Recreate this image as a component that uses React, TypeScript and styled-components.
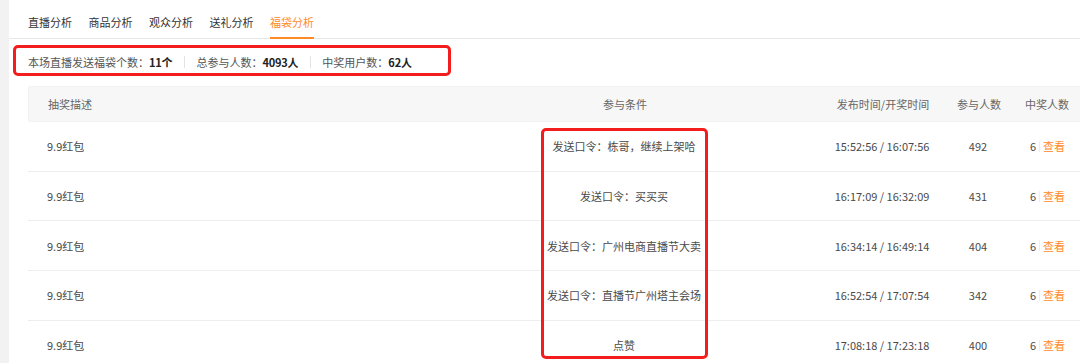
import React from 'react'
import styled, { createGlobalStyle } from 'styled-components'

const GlobalStyle = createGlobalStyle`
  html, body {
    margin: 0;
    padding: 0;
    background: #f2f2f2;
    font-family: "Noto Sans CJK SC", "Noto Sans", sans-serif;
    font-size: 11px;
    color: #4a4a4a;
  }
  * { box-sizing: border-box; }
`;

const Page = styled.div`
  position: relative;
  height: 363px;
  overflow: hidden;
`;

const Panel = styled.div`
  margin-left: 9px;
  height: 100%;
  background: #fff;
  padding-left: 19px;
`;

const TabBar = styled.div`
  display: flex;
  gap: 16.5px;
  height: 39px;
  margin-left: -19px;
  padding-left: 19px;
  border-bottom: 1px solid #e8e8e8;
`;

const Tab = styled.div<{ $active?: boolean }>`
  height: 39px;
  padding-top: 7px;
  display: flex;
  align-items: center;
  color: ${(p) => (p.$active ? '#ff8a2a' : '#333')};
  border-bottom: 2px solid ${(p) => (p.$active ? '#ff8a2a' : 'transparent')};
  margin-bottom: -1px;
`;

const Summary = styled.div`
  display: flex;
  align-items: center;
  height: 20px;
  margin-top: 13px;
`;

const SummaryItem = styled.div`
  display: flex;
  align-items: center;
  color: #555;
`;

const SummaryValue = styled.span`
  font-weight: 700;
  color: #222;
  letter-spacing: -0.2px;
`;

const Divider = styled.span`
  width: 1px;
  height: 12px;
  background: #e3e3e3;
  margin: 0 11px 0 12px;
`;

const Table = styled.div`
  margin-top: 14px;
`;

const cols = '412px 368px 148px 44px 1fr';

const HeadRow = styled.div`
  display: grid;
  grid-template-columns: ${cols};
  height: 36px;
  align-items: center;
  background: #f7f7f7;
  border: 1px solid #f0f0f0;
  border-right: none;
  border-radius: 3px 0 0 3px;
  color: #666;
`;

const Row = styled.div`
  display: grid;
  grid-template-columns: ${cols};
  height: 49.7px;
  align-items: center;
  border-bottom: 1px solid #eeeeee;
`;

const Cell = styled.div<{ $align?: 'left' | 'center' | 'right' }>`
  text-align: ${(p) => p.$align ?? 'center'};
  padding-left: ${(p) => (p.$align === 'left' ? '19px' : '0')};
  padding-right: ${(p) => (p.$align === 'right' ? '11px' : '0')};
  white-space: nowrap;
`;

const Winners = styled.div`
  display: flex;
  justify-content: flex-end;
  align-items: center;
  padding-right: 15px;
`;

const WinSep = styled.span`
  width: 1px;
  height: 11px;
  background: #eee;
  margin: 0 3px 0 3px;
`;

const ViewLink = styled.span`
  color: #ff8a2a;
  cursor: pointer;
`;

const Mark = styled.div`
  position: absolute;
  border: 3px solid #f31d1d;
  border-radius: 5px;
  pointer-events: none;
`;

const tabs = ['直播分析', '商品分析', '观众分析', '送礼分析', '福袋分析'];

const rows = [
  { cond: '发送口令：栋哥，继续上架哈', time: '15:52:56 / 16:07:56', joined: 492, won: 6 },
  { cond: '发送口令：买买买', time: '16:17:09 / 16:32:09', joined: 431, won: 6 },
  { cond: '发送口令：广州电商直播节大卖', time: '16:34:14 / 16:49:14', joined: 404, won: 6 },
  { cond: '发送口令：直播节广州塔主会场', time: '16:52:54 / 17:07:54', joined: 342, won: 6 },
  { cond: '点赞', time: '17:08:18 / 17:23:18', joined: 400, won: 6 },
];

export default function App() {
  return (
    <Page>
      <GlobalStyle />
      <Panel>
        <TabBar>
          {tabs.map((t) => (
            <Tab key={t} $active={t === '福袋分析'}>
              {t}
            </Tab>
          ))}
        </TabBar>
        <Summary>
          <SummaryItem>
            本场直播发送福袋个数：<SummaryValue>11个</SummaryValue>
          </SummaryItem>
          <Divider />
          <SummaryItem>
            总参与人数：<SummaryValue>4093人</SummaryValue>
          </SummaryItem>
          <Divider />
          <SummaryItem>
            中奖用户数：<SummaryValue>62人</SummaryValue>
          </SummaryItem>
        </Summary>
        <Table>
          <HeadRow>
            <Cell $align="left">抽奖描述</Cell>
            <Cell>参与条件</Cell>
            <Cell>发布时间/开奖时间</Cell>
            <Cell>参与人数</Cell>
            <Cell $align="right">中奖人数</Cell>
          </HeadRow>
          {rows.map((r) => (
            <Row key={r.time}>
              <Cell $align="left">9.9红包</Cell>
              <Cell>{r.cond}</Cell>
              <Cell>{r.time}</Cell>
              <Cell>{r.joined}</Cell>
              <Winners>
                {r.won}
                <WinSep />
                <ViewLink>查看</ViewLink>
              </Winners>
            </Row>
          ))}
        </Table>
      </Panel>
      <Mark style={{ left: 13, top: 45, width: 438, height: 31 }} />
      <Mark style={{ left: 541, top: 128, width: 167, height: 231 }} />
    </Page>
  )
}
